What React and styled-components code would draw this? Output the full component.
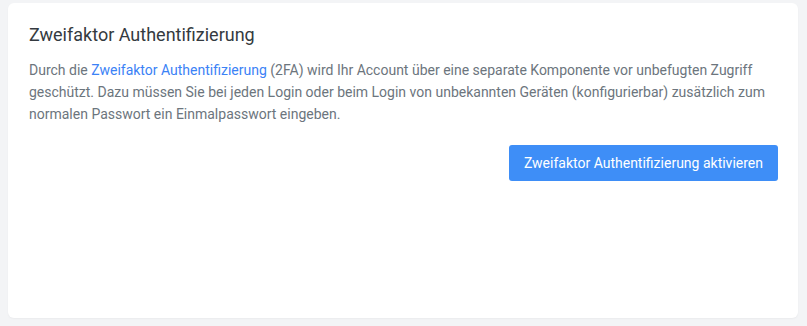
import React from 'react';
import styled, { createGlobalStyle } from 'styled-components';

const GlobalStyle = createGlobalStyle`
  html, body {
    margin: 0;
    padding: 0;
    background: #f3f4f6;
    font-family: Roboto, "Liberation Sans", sans-serif;
  }
`;

const Page = styled.div`
  padding: 3px 9px 8px 8px;
  height: 326px;
  box-sizing: border-box;
`;

const Card = styled.section`
  display: flex;
  flex-direction: column;
  height: 315px;
  box-sizing: border-box;
  background: #fff;
  border-radius: 6px;
  padding: 18px 20px 20px 21px;
  box-shadow: 0 1px 2px rgba(0, 0, 0, 0.04);
`;

const Title = styled.h2`
  margin: 0 0 10px;
  font-size: 18px;
  font-weight: 400;
  line-height: 28px;
  color: #343a40;
`;

const Text = styled.p`
  margin: 0;
  font-size: 14px;
  line-height: 22px;
  color: #6c757d;
`;

const Link = styled.a`
  color: #3b82f6;
  text-decoration: none;
`;

const Actions = styled.div`
  display: flex;
  justify-content: flex-end;
  margin-top: 20px;
`;

const Button = styled.button`
  font-family: inherit;
  font-size: 14px;
  color: #fff;
  background: #3e8ef7;
  border: none;
  border-radius: 3px;
  height: 36px;
  padding: 0 15px;
  cursor: pointer;
`;

export default function App() {
  return (
    <>
      <GlobalStyle />
      <Page>
        <Card>
          <Title>Zweifaktor Authentifizierung</Title>
          <Text>
            Durch die <Link href="#">Zweifaktor Authentifizierung</Link> (2FA) wird Ihr Account über eine separate Komponente vor unbefugten Zugriff geschützt. Dazu müssen Sie bei jeden Login oder beim Login von unbekannten Geräten (konfigurierbar) zusätzlich zum normalen Passwort ein Einmalpasswort eingeben.
          </Text>
          <Actions>
            <Button>Zweifaktor Authentifizierung aktivieren</Button>
          </Actions>
        </Card>
      </Page>
    </>
  );
}
